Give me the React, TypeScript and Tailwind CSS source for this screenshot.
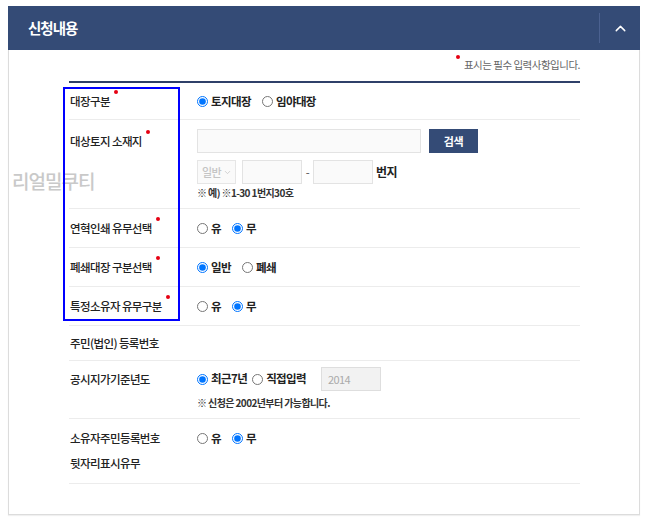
import { ChevronDown, ChevronUp } from "lucide-react";

const font = { fontFamily: '"Noto Sans CJK KR", "Noto Sans", sans-serif' };

function Dot({ className = "" }: { className?: string }) {
  return <span className={`absolute h-[4px] w-[4px] rounded-full bg-[#e60012] ${className}`} />;
}

function Label({ text, required }: { text: string; required?: boolean }) {
  return (
    <span className="relative inline-block leading-[16px]">
      {text}
      {required ? <Dot className="right-[-8px] top-[-3px]" /> : null}
    </span>
  );
}

type Option = { label: string; checked?: boolean };

function Radios({ name, options, gap = "gap-[11px]" }: { name: string; options: Option[]; gap?: string }) {
  return (
    <div className={`flex items-center ${gap}`}>
      {options.map((option) => (
        <label className="flex items-center gap-[3px]" key={option.label}>
          <input
            className="m-0 h-[11px] w-[11px]"
            type="radio"
            name={name}
            defaultChecked={option.checked}
          />
          <span className="text-[11.5px] font-semibold tracking-[-0.6px] text-[#222]">{option.label}</span>
        </label>
      ))}
    </div>
  );
}

export default function App(): React.ReactElement {
  return (
    <div className="min-h-[518px] bg-white pl-[8px] pt-[6px]" style={font}>
      <div className="relative w-[632px]">
        <header className="flex h-[44px] items-center justify-between bg-[#344b76]">
          <h2 className="pl-[20px] text-[14.5px] font-bold tracking-[-1px] text-white">신청내용</h2>
          <div className="flex h-full items-center">
            <div className="h-[30px] w-px bg-[#4b6190]" />
            <div className="flex w-[40px] justify-center">
              <ChevronUp size={17} strokeWidth={2} color="#ffffff" />
            </div>
          </div>
        </header>

        <div className="border-x border-b border-[#dcdcdc] pb-[30px] pl-[60px] pr-[59px] pt-[8px] shadow-[0_1px_1px_rgba(0,0,0,0.06)]">
          <p className="flex justify-end pb-[9px] text-[10.5px] leading-[14px] tracking-[-0.5px] text-[#666]">
            <span className="relative pl-[8px]">
              <Dot className="left-0 top-[-3px]" />
              표시는 필수 입력사항입니다.
            </span>
          </p>

          <div className="border-t-2 border-[#2f4069] text-[11.5px] font-medium tracking-[-0.6px] text-[#222]">
            <div className="flex border-b border-[#ececec] py-[8px] leading-[20px]">
              <div className="flex w-[128px] items-center pl-[1px]">
                <Label text="대장구분" required />
              </div>
              <div className="flex items-center">
                <Radios name="ledger" options={[{ label: "토지대장", checked: true }, { label: "임야대장" }]} />
              </div>
            </div>

            <div className="flex border-b border-[#ececec] pb-[7px] pt-[9px]">
              <div className="flex h-[24px] w-[128px] items-center pl-[1px]">
                <Label text="대상토지 소재지" required />
              </div>
              <div className="flex flex-col">
                <div className="flex gap-[8px]">
                  <div className="h-[24px] w-[224px] border border-[#e3e3e3] bg-[#fafafa]" />
                  <button className="h-[24px] w-[49px] bg-[#344b76] text-[11px] font-bold tracking-[-0.3px] text-white">
                    검색
                  </button>
                </div>
                <div className="mt-[7px] flex items-center">
                  <div className="flex h-[24px] w-[39px] items-center justify-between border border-[#e6e6e6] bg-[#fafafa] pl-[4px] pr-[3px] text-[11px] text-[#c4c4c4]">
                    일반
                    <ChevronDown size={9} strokeWidth={2} color="#c4c4c4" />
                  </div>
                  <div className="ml-[6px] h-[24px] w-[60px] border border-[#e3e3e3] bg-[#fafafa]" />
                  <span className="w-[11px] text-center text-[11px] text-[#666]">-</span>
                  <div className="h-[24px] w-[60px] border border-[#e3e3e3] bg-[#fafafa]" />
                  <span className="ml-[3px] text-[12px] font-semibold tracking-[-0.5px] text-[#222]">번지</span>
                </div>
                <p className="mt-[1px] text-[10px] font-semibold leading-[16px] tracking-[-0.6px] text-[#333]">
                  ※ 예) ※1-30 1번지30호
                </p>
              </div>
            </div>

            <div className="flex border-b border-[#ececec] py-[9px] leading-[20px]">
              <div className="flex w-[128px] items-center pl-[1px]">
                <Label text="연혁인쇄 유무선택" required />
              </div>
              <Radios name="history" options={[{ label: "유" }, { label: "무", checked: true }]} />
            </div>

            <div className="flex border-b border-[#ececec] py-[9px] leading-[20px]">
              <div className="flex w-[128px] items-center pl-[1px]">
                <Label text="폐쇄대장 구분선택" required />
              </div>
              <Radios name="closed" options={[{ label: "일반", checked: true }, { label: "폐쇄" }]} />
            </div>

            <div className="flex border-b border-[#ececec] py-[9px] leading-[20px]">
              <div className="flex w-[128px] items-center pl-[1px]">
                <Label text="특정소유자 유무구분" required />
              </div>
              <Radios name="owner" options={[{ label: "유" }, { label: "무", checked: true }]} />
            </div>

            <div className="flex border-b border-[#ececec] py-[9px] leading-[20px]">
              <div className="flex w-[128px] items-center pl-[1px]">
                <Label text="주민(법인) 등록번호" />
              </div>
            </div>

            <div className="flex border-b border-[#ececec] pb-[7px] pt-[6px]">
              <div className="flex h-[24px] w-[128px] items-center pl-[1px]">
                <Label text="공시지가기준년도" />
              </div>
              <div className="flex flex-col">
                <div className="flex h-[24px] items-center">
                  <Radios name="year" gap="gap-[5px]" options={[{ label: "최근7년", checked: true }, { label: "직접입력" }]} />
                  <div className="ml-[15px] flex h-[24px] w-[60px] items-center border border-[#dedede] bg-[#f2f2f2] pl-[6px] text-[11px] font-normal text-[#aaa]">
                    2014
                  </div>
                </div>
                <p className="mt-[4px] text-[10px] font-semibold leading-[16px] tracking-[-0.6px] text-[#333]">
                  ※ 신청은 2002년부터 가능합니다.
                </p>
              </div>
            </div>

            <div className="flex border-b border-[#ececec] py-[7px] leading-[25px]">
              <div className="w-[128px] pl-[1px]">
                소유자주민등록번호
                <br />
                뒷자리표시유무
              </div>
              <div className="flex h-[25px] items-center">
                <Radios name="suffix" options={[{ label: "유" }, { label: "무", checked: true }]} />
              </div>
            </div>
          </div>
        </div>

        <div className="pointer-events-none absolute left-[4px] top-[161px] text-[19px] font-medium tracking-[-1px] text-[#c9c9c9]">
          리얼밀쿠티
        </div>
        <div className="pointer-events-none absolute left-[55px] top-[81px] h-[234px] w-[117px] border-2 border-[#0000ff]" />
      </div>
    </div>
  );
}
